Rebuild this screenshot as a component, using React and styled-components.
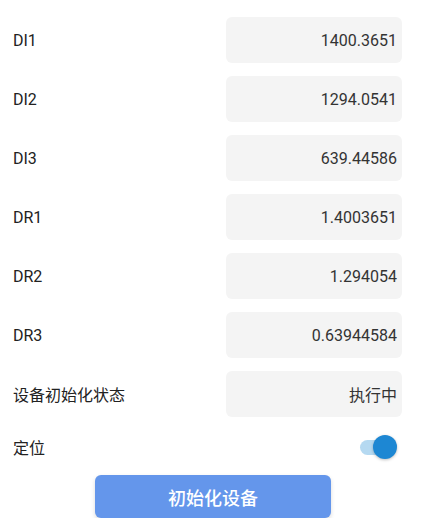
import React, { useState } from 'react';
import styled, { createGlobalStyle } from 'styled-components';

const GlobalStyle = createGlobalStyle`
  body {
    margin: 0;
    background: #ffffff;
    font-family: Roboto, "Noto Sans CJK SC", sans-serif;
  }
`;

const Page = styled.div`
  width: 424px;
  padding: 17px 22px 0 13px;
  box-sizing: border-box;
`;

const Row = styled.div`
  display: flex;
  align-items: center;
  justify-content: space-between;
  height: ${p => p.$h || 46}px;
  margin-bottom: ${p => p.$mb ?? 13}px;
`;

const Label = styled.div`
  font-size: 16px;
  color: #222;
`;

const ValueBox = styled.div`
  width: 176px;
  height: 46px;
  box-sizing: border-box;
  background: #f4f4f4;
  border-radius: 6px;
  display: flex;
  align-items: center;
  justify-content: flex-end;
  padding-right: 5px;
  font-size: 16px;
  color: #333;
`;

const Switch = styled.button`
  position: relative;
  width: 42px;
  height: 28px;
  border: none;
  background: transparent;
  padding: 0;
  margin-right: 2px;
  cursor: pointer;

  &::before {
    content: '';
    position: absolute;
    left: 2px;
    top: 7px;
    width: 34px;
    height: 15px;
    border-radius: 8px;
    background: ${p => (p.$on ? '#b5d9f1' : '#cfcfcf')};
  }

  &::after {
    content: '';
    position: absolute;
    top: 2px;
    left: ${p => (p.$on ? '15px' : '0px')};
    width: 24px;
    height: 24px;
    border-radius: 50%;
    background: ${p => (p.$on ? '#1d87d3' : '#f5f5f5')};
    box-shadow: 0 1px 3px rgba(0, 0, 0, 0.25);
  }
`;

const ButtonWrap = styled.div`
  display: flex;
  padding-left: 82px;
`;

const InitButton = styled.button`
  width: 236px;
  height: 43px;
  border: none;
  border-radius: 6px;
  background: #6496eb;
  color: #fff;
  font-family: "Noto Sans CJK SC", sans-serif;
  font-size: 18px;
  font-weight: 500;
  box-shadow: 0 2px 4px rgba(0, 0, 0, 0.15);
  cursor: pointer;
`;

const rows = [
  ['DI1', '1400.3651'],
  ['DI2', '1294.0541'],
  ['DI3', '639.44586'],
  ['DR1', '1.4003651'],
  ['DR2', '1.294054'],
  ['DR3', '0.63944584'],
  ['设备初始化状态', '执行中'],
];

export default function App() {
  const [on, setOn] = useState(true);
  return (
    <Page>
      <GlobalStyle />
      {rows.map(([k, v]) => (
        <Row key={k}>
          <Label>{k}</Label>
          <ValueBox>{v}</ValueBox>
        </Row>
      ))}
      <Row $h={36} $mb={10} style={{ marginTop: -1 }}>
        <Label>定位</Label>
        <Switch $on={on} onClick={() => setOn(!on)} />
      </Row>
      <ButtonWrap>
        <InitButton>初始化设备</InitButton>
      </ButtonWrap>
    </Page>
  );
}
